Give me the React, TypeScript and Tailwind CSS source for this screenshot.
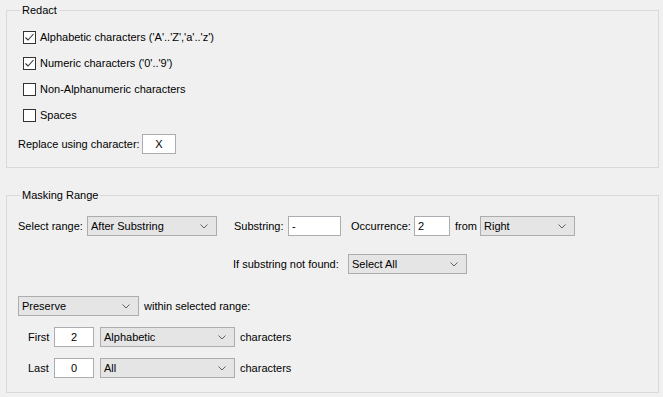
import type { ReactNode } from 'react'

const FONT = "font-['Liberation_Sans',Arial,sans-serif]"

function Chevron() {
  return (
    <svg width="8" height="5" viewBox="0 0 8 5" className="shrink-0">
      <path d="M0.5 0.5 L4 4 L7.5 0.5" fill="none" stroke="#5f5f5f" strokeWidth="1" />
    </svg>
  )
}

function Checkbox({ checked, label }: { checked: boolean; label: string }) {
  return (
    <div className="flex h-[26px] items-center gap-[4px] pl-[5px]">
      <div className="flex h-[13px] w-[13px] shrink-0 items-center justify-center border border-[#333333] bg-white">
        {checked ? (
          <svg width="11" height="11" viewBox="0 0 11 11">
            <path d="M1.5 5.5 L4 8 L9.5 2" fill="none" stroke="#333333" strokeWidth="1.1" />
          </svg>
        ) : null}
      </div>
      <span>{label}</span>
    </div>
  )
}

function Combo({ value, width }: { value: string; width: string }) {
  return (
    <div
      className={`flex h-[20px] shrink-0 items-center justify-between border border-[#adadad] bg-[#e5e5e5] pl-[3px] pr-[8px] ${width}`}
    >
      <span>{value}</span>
      <Chevron />
    </div>
  )
}

function TextBox({ value, width, center }: { value: string; width: string; center?: boolean }) {
  return (
    <div
      className={`flex h-[20px] shrink-0 items-center border border-[#abadb3] bg-white px-[3px] ${width} ${center ? 'justify-center' : ''}`}
    >
      {value}
    </div>
  )
}

function Group({ title, className, children }: { title: string; className?: string; children: ReactNode }) {
  return (
    <fieldset className={`ml-[6px] w-[653px] border border-[#d9d9d9] ${className ?? ''}`}>
      <legend className="ml-[2px] px-[2px] leading-[16px]">{title}</legend>
      {children}
    </fieldset>
  )
}

export default function App() {
  return (
    <div
      className={`h-[397px] w-[663px] overflow-hidden whitespace-nowrap bg-[#f0f0f0] pt-[2px] text-[11px] leading-[16px] text-black ${FONT}`}
    >
      <Group title="Redact" className="pb-[13px] pl-[11px] pt-[6px]">
        <Checkbox checked label="Alphabetic characters ('A'..'Z','a'..'z')" />
        <Checkbox checked label="Numeric characters ('0'..'9')" />
        <Checkbox checked={false} label="Non-Alphanumeric characters" />
        <Checkbox checked={false} label="Spaces" />
        <div className="mt-[6px] flex h-[20px] items-center">
          <span className="w-[124px] shrink-0">Replace using character:</span>
          <TextBox value="X" width="w-[34px]" center />
        </div>
      </Group>

      <Group title="Masking Range" className="mt-[19px] pb-[14px] pl-[11px] pt-[13px]">
        <div className="flex h-[20px] items-center">
          <span className="w-[69px] shrink-0">Select range:</span>
          <Combo value="After Substring" width="w-[130px]" />
          <span className="ml-[17px] w-[54px] shrink-0">Substring:</span>
          <TextBox value="-" width="w-[53px]" />
          <span className="ml-[10px] w-[63px] shrink-0">Occurrence:</span>
          <TextBox value="2" width="w-[36px]" />
          <span className="ml-[5px] w-[25px] shrink-0">from</span>
          <Combo value="Right" width="w-[95px]" />
        </div>

        <div className="mt-[18px] flex h-[20px] items-center">
          <span className="ml-[215px] w-[115px] shrink-0">If substring not found:</span>
          <Combo value="Select All" width="w-[119px]" />
        </div>

        <div className="mt-[22px] flex h-[20px] items-center">
          <Combo value="Preserve" width="w-[121px]" />
          <span className="ml-[5px]">within selected range:</span>
        </div>

        <div className="mt-[11px] flex h-[20px] items-center">
          <span className="ml-[10px] w-[26px] shrink-0">First</span>
          <TextBox value="2" width="w-[40px]" center />
          <div className="ml-[6px]">
            <Combo value="Alphabetic" width="w-[135px]" />
          </div>
          <span className="ml-[5px]">characters</span>
        </div>

        <div className="mt-[11px] flex h-[20px] items-center">
          <span className="ml-[10px] w-[26px] shrink-0">Last</span>
          <TextBox value="0" width="w-[40px]" center />
          <div className="ml-[6px]">
            <Combo value="All" width="w-[135px]" />
          </div>
          <span className="ml-[5px]">characters</span>
        </div>
      </Group>
    </div>
  )
}
